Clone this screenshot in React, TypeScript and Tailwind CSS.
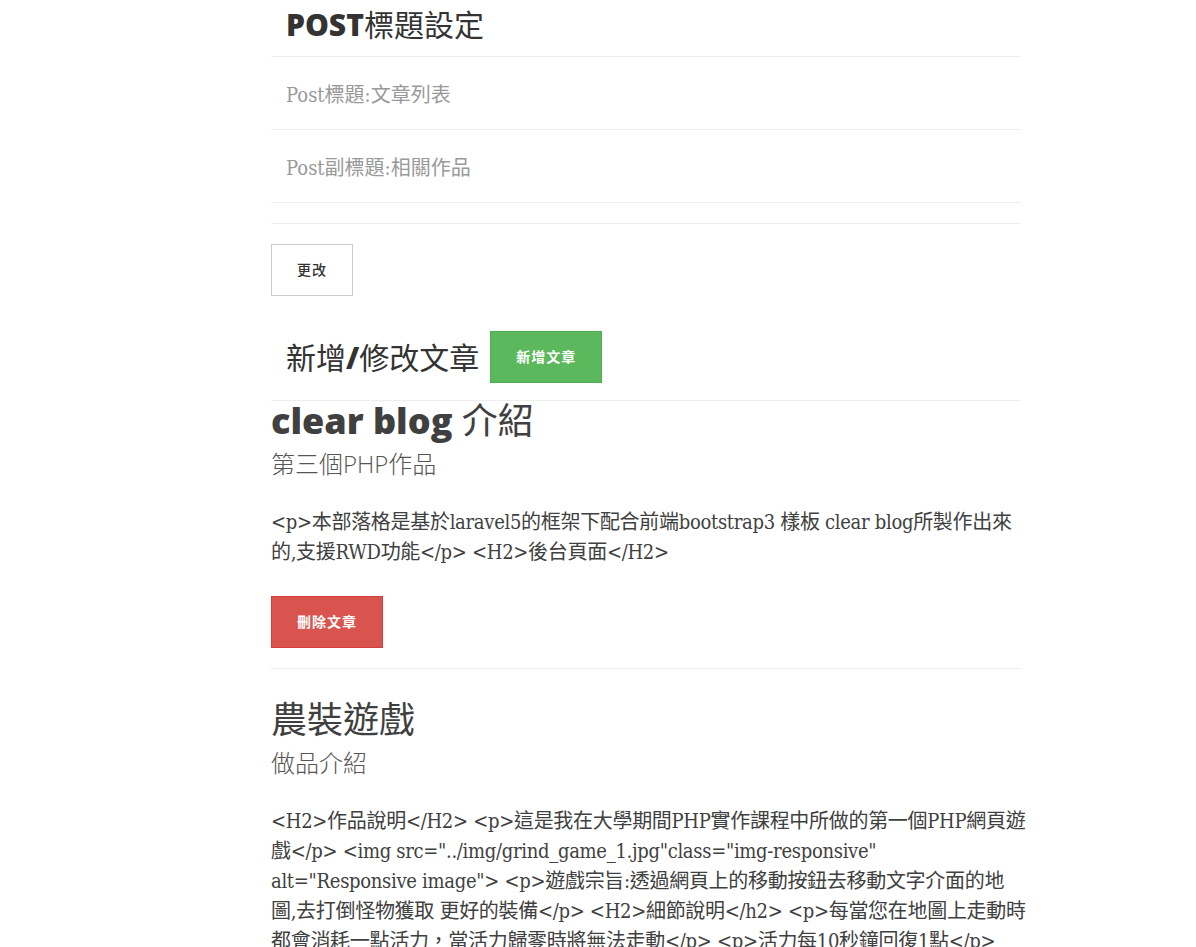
import React from "react"

const serif = "font-['DejaVu_Serif_Condensed','Noto_Sans_CJK_TC',serif] font-stretch-condensed"
const sans = "font-['Open_Sans','Noto_Sans_CJK_TC',sans-serif]"

// Bootstrap-ish button used by the clean blog theme
function Btn({ children, variant }: { children: React.ReactNode; variant: "default" | "success" | "danger" }) {
  const colors = {
    default: "bg-white border-[#ccc] text-[#333] font-medium",
    success: "bg-[#5cb85c] border-[#4cae4c] text-white font-bold",
    danger: "bg-[#d9534f] border-[#d43f3a] text-white font-bold",
  }[variant]
  return (
    <button className={`${sans} ${colors} border px-[25px] py-[15px] text-[14px] leading-[20px] tracking-[1px]`}>
      {children}
    </button>
  )
}

const posts = [
  {
    id: 1,
    title: (
      <>
        <span className="font-extrabold">clear blog</span> 介紹
      </>
    ),
    subtitle: "第三個PHP作品",
    lines: [
      "<p>本部落格是基於laravel5的框架下配合前端bootstrap3 樣板 clear blog所製作出來",
      "的,支援RWD功能</p> <H2>後台頁面</H2>",
    ],
    first: true,
  },
  {
    id: 2,
    title: <>農裝遊戲</>,
    subtitle: "做品介紹",
    lines: [
      "<H2>作品說明</H2> <p>這是我在大學期間PHP實作課程中所做的第一個PHP網頁遊",
      '戲</p> <img src="../img/grind_game_1.jpg"class="img-responsive"',
      'alt="Responsive image"> <p>遊戲宗旨:透過網頁上的移動按鈕去移動文字介面的地',
      "圖,去打倒怪物獲取 更好的裝備</p> <H2>細節說明</h2> <p>每當您在地圖上走動時",
      "都會消耗一點活力，當活力歸零時將無法走動</p> <p>活力每10秒鐘回復1點</p>",
    ],
    first: false,
  },
]

export default function App() {
  return (
    <div className="min-h-screen bg-white text-[#404040] overflow-hidden">
      <div className="ml-[271px] w-[750px]">
        {/* POST title settings */}
        <h3 className={`${sans} pl-[15px] pt-[8px] pb-[15px] text-[30px] leading-[33px] text-[#333]`}>
          <span className="font-extrabold">POST</span>
          <span className="font-normal">標題設定</span>
        </h3>
        <ul className="border-t border-[#eee]">
          <li className={`${serif} h-[73px] border-b border-[#eee] pl-[15px] pt-[4px] flex items-center text-[20px] text-[#999]`}>
            Post標題:文章列表
          </li>
          <li className={`${serif} h-[73px] border-b border-[#eee] pl-[15px] pt-[4px] flex items-center text-[20px] text-[#999]`}>
            Post副標題:相關作品
          </li>
          <li className="h-[21px] border-b border-[#eee]"></li>
        </ul>
        <div className="mt-[20px]">
          <Btn variant="default">更改</Btn>
        </div>

        {/* Add / edit posts */}
        <div className="mt-[35px] pl-[15px] flex items-center gap-[11px]">
          <h3 className={`${sans} text-[30px] leading-[33px] text-[#333]`}>
            <span className="font-normal">新增</span>
            <span className="font-extrabold">/</span>
            <span className="font-normal">修改文章</span>
          </h3>
          <Btn variant="success">新增文章</Btn>
        </div>
        <hr className="mt-[17px] border-[#eee]" />

        {posts.map((post) => (
          <div key={post.id} className={post.first ? "" : "mt-[31px]"}>
            <h2 className={`${sans} text-[36px] leading-[40px] font-normal mb-[10px]`}>{post.title}</h2>
            <h3 className={`${sans} text-[24px] leading-[26px] font-light text-[#555]`}>{post.subtitle}</h3>
            <p className={`${serif} mt-[30px] text-[20px] leading-[30px] tracking-[-0.3px] text-[#404040]`}>
              {post.lines.map((line, i) => (
                <span key={i} className="block whitespace-nowrap">
                  {line}
                </span>
              ))}
            </p>
            {post.first && (
              <>
                <div className="mt-[29px]">
                  <Btn variant="danger">刪除文章</Btn>
                </div>
                <hr className="mt-[20px] border-[#eee]" />
              </>
            )}
          </div>
        ))}
      </div>
    </div>
  )
}
